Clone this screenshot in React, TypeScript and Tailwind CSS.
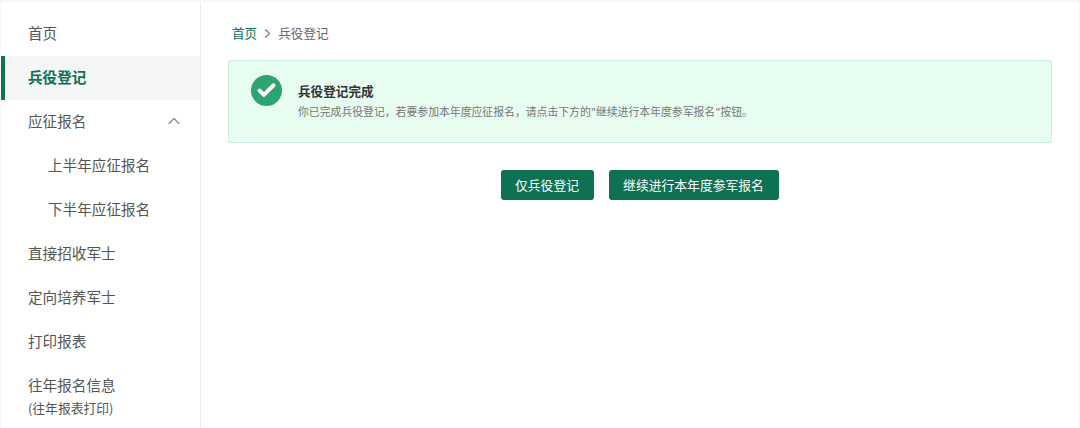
import { ChevronRight, ChevronUp, Check } from "lucide-react";

const font = { fontFamily: '"Noto Sans CJK SC", "Liberation Sans", sans-serif' };

const NavItem = ({ label, active, sub }: { label: string; active?: boolean; sub?: boolean }) => (
  <div
    className={`flex h-11 items-center pb-[2px] text-[14.6px] ${sub ? "pl-[47px]" : "pl-[27px]"} ${
      active ? "border-l-4 border-[#0e7153] bg-[#f5f7f6] !pl-[23px] font-bold text-[#0e7153]" : "text-[#555]"
    }`}
  >
    {label}
  </div>
);

const App = () => {
  return (
    <div
      className="flex h-[428px] w-[1080px] overflow-hidden bg-[#f7f7f7] pl-px pr-px pt-[2px]"
      style={font}
    >
      <aside className="w-[199px] shrink-0 bg-white pt-[10px]">
        <NavItem label="首页" />
        <NavItem label="兵役登记" active />
        <div className="flex h-11 items-center justify-between pb-[2px] pl-[27px] pr-[16px] text-[14.6px] text-[#555]">
          应征报名
          <ChevronUp className="h-5 w-5 text-[#888]" strokeWidth={1.4} />
        </div>
        <NavItem label="上半年应征报名" sub />
        <NavItem label="下半年应征报名" sub />
        <NavItem label="直接招收军士" />
        <NavItem label="定向培养军士" />
        <NavItem label="打印报表" />
        <div className="pl-[27px] pt-[8px] text-[#555]">
          <div className="text-[14.6px] leading-[26px]">往年报名信息</div>
          <div className="text-[12.8px] leading-[20px]">(往年报表打印)</div>
        </div>
      </aside>

      <main className="min-w-0 flex-1 border-l border-[#eeeeee] bg-white px-[27px] pt-[21px]">
        <div className="flex h-5 items-center pl-[4px] text-[12.6px] text-[#666]">
          <span className="text-[#0e7153]">首页</span>
          <ChevronRight className="mx-[3px] h-[15px] w-[15px] text-[#888]" strokeWidth={2.5} />
          <span>兵役登记</span>
        </div>

        <div className="mt-[17px] flex h-[83px] items-start gap-[16px] rounded-[2px] border border-[#c9f2dd] bg-[#e6fdf0] pl-[22px] pt-[14px]">
          <div className="flex h-[31px] w-[31px] items-center justify-center rounded-full bg-[#2ba471]">
            <Check className="h-[21px] w-[21px] text-white" strokeWidth={4.5} />
          </div>
          <div className="pt-[7px]">
            <div className="mb-[3px] text-[12.6px] font-bold leading-[18px] text-[#333]">兵役登记完成</div>
            <div className="text-[10.85px] leading-[16px] text-[#777]">
              你已完成兵役登记，若要参加本年度应征报名，请点击下方的"继续进行本年度参军报名"按钮。
            </div>
          </div>
        </div>

        <div className="mt-[27px] flex justify-center gap-[15px] pr-px">
          <button className="h-[29.5px] w-[93px] rounded-[3px] bg-[#0e7153] text-[12.8px] text-white">
            仅兵役登记
          </button>
          <button className="h-[29.5px] w-[170px] rounded-[3px] bg-[#0e7153] text-[12.8px] text-white">
            继续进行本年度参军报名
          </button>
        </div>
      </main>
    </div>
  );
};

export default App;
